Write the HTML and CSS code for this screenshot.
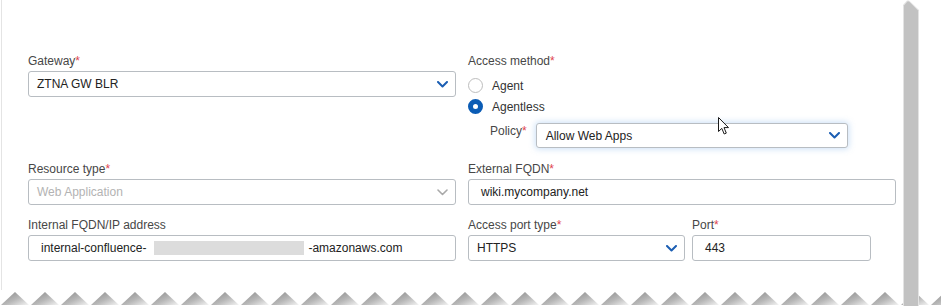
FILE: index.html
```html
<!DOCTYPE html>
<html lang="en">
<head>
<meta charset="utf-8">
<title>Resource</title>
<link rel="stylesheet" href="styles.css">
</head>
<body>
<div class="page">
  <div class="sheet">
    <div class="form">
      <div class="row row-first">
        <div class="field">
          <span class="label">Gateway<span class="req">*</span></span>
          <div class="box select">
            <span class="value">ZTNA GW BLR</span>
            <svg class="chev" width="11" height="7" viewBox="0 0 11 7"><path d="M1 1 L5.5 5.5 L10 1" /></svg>
          </div>
        </div>
        <div class="field">
          <span class="label">Access method<span class="req">*</span></span>
          <div class="radios">
            <div class="radio"><span class="dot"></span><span>Agent</span></div>
            <div class="radio"><span class="dot on"></span><span>Agentless</span></div>
          </div>
          <div class="policy">
            <span class="policy-label">Policy<span class="req">*</span></span>
            <div class="box select glow">
              <span class="value">Allow Web Apps</span>
              <svg class="chev" width="11" height="7" viewBox="0 0 11 7"><path d="M1 1 L5.5 5.5 L10 1" /></svg>
            </div>
          </div>
        </div>
      </div>
      <div class="row">
        <div class="field">
          <span class="label">Resource type<span class="req">*</span></span>
          <div class="box select disabled">
            <span class="value">Web Application</span>
            <svg class="chev" width="11" height="7" viewBox="0 0 11 7"><path d="M1 1 L5.5 5.5 L10 1" /></svg>
          </div>
        </div>
        <div class="field">
          <span class="label">External FQDN<span class="req">*</span></span>
          <div class="box text"><span class="value">wiki.mycompany.net</span></div>
        </div>
      </div>
      <div class="row">
        <div class="field">
          <span class="label">Internal FQDN/IP address</span>
          <div class="box text"><span class="value">internal-confluence-</span><span class="redact"></span><span class="value">-amazonaws.com</span></div>
        </div>
        <div class="split">
          <div class="field port-type">
            <span class="label">Access port type<span class="req">*</span></span>
            <div class="box select">
              <span class="value">HTTPS</span>
              <svg class="chev" width="11" height="7" viewBox="0 0 11 7"><path d="M1 1 L5.5 5.5 L10 1" /></svg>
            </div>
          </div>
          <div class="field port">
            <span class="label">Port<span class="req">*</span></span>
            <div class="box text"><span class="value">443</span></div>
          </div>
        </div>
      </div>
    </div>
  </div>
  <svg class="tear" width="941" height="18" viewBox="0 0 941 18">
    <defs>
      <linearGradient id="tg" x1="0" y1="0" x2="1" y2="1">
        <stop offset="0" stop-color="#858585"/>
        <stop offset="0.55" stop-color="#b8b8b8"/>
        <stop offset="1" stop-color="#f4f4f4"/>
      </linearGradient>
      <pattern id="tp" x="0" y="0" width="30" height="18" patternUnits="userSpaceOnUse">
        <polygon points="1,15 15,2 29,15" fill="url(#tg)"/>
      </pattern>
    </defs>
    <rect x="0" y="0" width="941" height="18" fill="url(#tp)"/>
  </svg>
  <svg class="scrollbar" width="18" height="306" viewBox="0 0 18 306">
    <polygon points="0,5 4,0.5 6,0.5 16,10 16,306 0,306" fill="#e3e3e3"/>
    <polygon points="1,5.5 4.5,1.5 6,1.5 15,10.5 15,306 1,306" fill="#c2c2c2"/>
  </svg>
  <svg class="cursor" width="14" height="20" viewBox="0 0 14 20">
    <path d="M1.5 1.5 L1.5 15.5 L4.8 12.4 L7.2 18 L9.3 17.1 L7 11.6 L11.5 11.6 Z" fill="#fff" stroke="#1a1a1a" stroke-width="1" stroke-linejoin="miter"/>
  </svg>
</div>
</body>
</html>
```

FILE: styles.css
```css
html, body {
  margin: 0;
  padding: 0;
  background: #ffffff;
}

body {
  font-family: "Liberation Sans", Arial, sans-serif;
  font-size: 12px;
  color: #222222;
}

.page {
  position: relative;
  width: 941px;
  height: 308px;
  overflow: hidden;
}

.sheet {
  height: 290px;
  margin-left: 1px;
  border-left: 1px solid #e4e4e4;
  box-sizing: border-box;
  padding: 54px 0 0 26px;
}

.form {
  display: flex;
  flex-direction: column;
  gap: 13px;
  width: 868px;
}

.row {
  display: grid;
  grid-template-columns: 428px 428px;
  column-gap: 12px;
}

.row-first {
  margin-bottom: 1px;
}

.field {
  display: flex;
  flex-direction: column;
}

.label {
  display: block;
  height: 15px;
  line-height: 15px;
  margin-bottom: 2px;
  color: #474747;
  white-space: nowrap;
}

.req {
  color: #e0444e;
}

.box {
  height: 26px;
  box-sizing: border-box;
  border: 1px solid #b8bdc2;
  border-radius: 3px;
  background: #ffffff;
  display: flex;
  align-items: center;
  padding: 0 7px 0 8px;
  color: #222222;
  white-space: nowrap;
}

.box.text {
  padding-left: 12px;
}

.select .chev {
  margin-left: auto;
  flex: none;
}

.chev path {
  fill: none;
  stroke: #1b5eb3;
  stroke-width: 2;
  stroke-linecap: round;
  stroke-linejoin: round;
}

.disabled .value {
  color: #b3b3b3;
}

.disabled .chev path {
  stroke: #a9a9a9;
  stroke-width: 1.6;
}

.glow {
  box-shadow: 0 0 6px 1px rgba(110, 165, 230, 0.35);
}

.radios {
  margin-top: 4px;
  display: flex;
  flex-direction: column;
}

.radio {
  display: flex;
  align-items: center;
  gap: 9px;
  height: 21px;
  color: #333333;
}

.dot {
  width: 15px;
  height: 15px;
  box-sizing: border-box;
  border-radius: 50%;
  border: 1px solid #bdbdbd;
  background: #ffffff;
  flex: none;
}

.dot.on {
  border: 5px solid #0b5cb5;
}

.policy {
  display: flex;
  align-items: flex-start;
  gap: 9px;
  margin-top: 6px;
  padding-left: 22px;
}

.policy-label {
  line-height: 15px;
  padding-top: 1px;
  color: #474747;
}

.policy .box {
  width: 312px;
  height: 25px;
  padding-left: 9px;
}

.redact {
  display: inline-block;
  width: 150px;
  height: 14px;
  margin-left: 8px;
  margin-right: 4px;
  background: #dcdcdc;
}

.split {
  display: flex;
  gap: 7px;
}

.port-type {
  width: 217px;
}

.port {
  width: 179px;
}

.tear {
  display: block;
}

.scrollbar {
  position: absolute;
  left: 903px;
  top: 0;
}

.cursor {
  position: absolute;
  left: 717px;
  top: 116px;
}
```
